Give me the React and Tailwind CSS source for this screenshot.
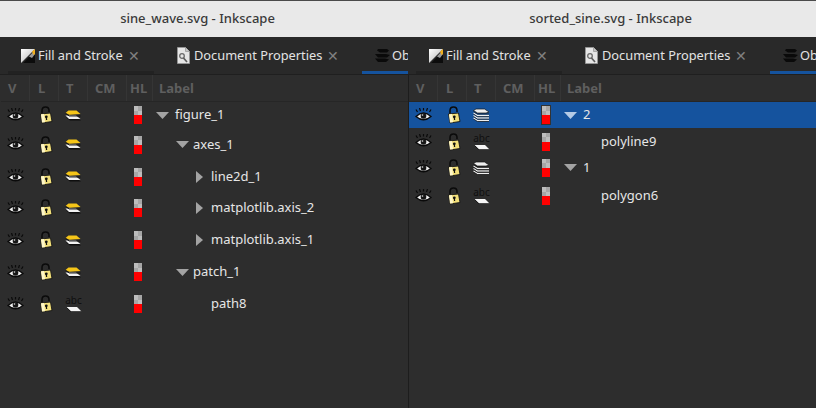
import React from "react";

const Eye = () => (
  <svg width="17" height="15" viewBox="0 0 17 15" className="flex-none">
    <path d="M2.500 4 1 1.500M5.500 3 4.500 0M8.500 2.500V0M11.500 3l1-3M14.500 4 16 1.500" stroke="#0a0a0a" strokeWidth="1.200" fill="none" />
    <path d="M1 8.500q7.500-7 15 0q-7.500 6.500-15 0z" fill="#f0f0f0" stroke="#0a0a0a" strokeWidth="1.300" />
    <circle cx="8.500" cy="8" r="2.800" fill="#161616" />
    <circle cx="7.500" cy="7" r="0.800" fill="#ddd" />
  </svg>
);

const Lock = () => (
  <svg width="14" height="18" viewBox="0 0 14 18" className="flex-none">
    <path d="M3 8V4.500Q3 1 6.500 1T10 4.500V6" stroke="#0a0a0a" strokeWidth="1.500" fill="none" />
    <path d="M1.500 8 11.500 7l1.500 8.500-10 1.500z" fill="#f3e07a" stroke="#161616" strokeWidth="0.900" />
    <path d="M2 8.200 5 8l1 8.200-3 .4z" fill="#fff7c8" />
    <circle cx="7.300" cy="10.800" r="1.400" fill="#111" />
    <path d="M6.700 11h1.200l.3 3H7z" fill="#111" />
  </svg>
);

const GroupIcon = () => (
  <svg width="17" height="11" viewBox="0 0 17 11" className="flex-none">
    <path d="M1 7.500h10.500l4.500 3H5z" fill="#0e0e0e" />
    <path d="M0.500 5.500h10.500l4.500 3.500H4z" fill="#f2f2f2" />
    <path d="M3.500 .5h8l4 3.500-11 .8L.5 3z" fill="#f5c518" />
    <path d="M.5 3.300 4.200 6H15.500" stroke="#111" strokeWidth="0.900" fill="none" />
  </svg>
);

const StackIcon = () => (
  <svg width="17" height="14" viewBox="0 0 17 14" className="flex-none">
    <path d="M3 1h8.500l4.500 3-3 1H4.500L.5 2.500z" fill="#efefef" stroke="#161616" strokeWidth="0.700" />
    <path d="M.5 5 4.500 7.500H16M.5 7.500 4.500 10H16M.5 10 4.500 12.500H16" stroke="#efefef" strokeWidth="1.400" fill="none" />
    <path d="M.5 3.500 4.500 6H16M.5 6 4.500 8.700H16M.5 8.500 4.500 11.200H16M.5 11 4.500 13.500H16" stroke="#161616" strokeWidth="0.700" fill="none" />
  </svg>
);

const TextIcon = () => (
  <div className="flex w-[16px] flex-none flex-col items-center">
    <span className="text-[10px] leading-[9px] text-[#0f0f0f]">abc</span>
    <svg width="16" height="6" viewBox="0 0 16 6" className="mt-[1px]">
      <path d="M.5 1H11l4.500 4.500H5z" fill="#f5f5f5" />
      <path d="M.5 1.500 5 5.800h10.500" stroke="#0c0c0c" strokeWidth="0.800" fill="none" />
    </svg>
  </div>
);

const HlBar = ({ selected }) => (
  <div className={`flex w-[8px] flex-col ${selected ? "outline outline-1 outline-[#333]" : ""}`}>
    <div className="grid h-[9px] grid-cols-2 grid-rows-2">
      <div className="bg-[#bdbdbd]" />
      <div className="bg-[#a6a6a6]" />
      <div className="bg-[#a6a6a6]" />
      <div className="bg-[#bdbdbd]" />
    </div>
    <div className="h-[9px] bg-[#ff0000]" />
  </div>
);

const FillIcon = () => (
  <svg width="16" height="16" viewBox="0 0 16 16" className="flex-none">
    <defs>
      <linearGradient id="fillSheet" x1="0" y1="0" x2="1" y2="1">
        <stop offset="0" stopColor="#ffffff" />
        <stop offset="0.6" stopColor="#cfcfcf" />
      </linearGradient>
    </defs>
    <path d="M1 1h14L1 15z" fill="url(#fillSheet)" />
    <path d="M15 3v12H3z" fill="#0c0c0c" />
    <path d="M9 8.500 15 2v4l-3 4z" fill="#999" />
    <path d="M12 3.500 15 1v5l-1.500 1z" fill="#f0b020" />
  </svg>
);

const DocIcon = () => (
  <svg width="13" height="17" viewBox="0 0 13 17" className="mr-[2px] flex-none">
    <path d="M.5.500h8l4 4v12H.5z" fill="#e6e6e6" stroke="#9a9a9a" strokeWidth="0.800" />
    <path d="M8.500.500v4h4" fill="#c4c4c4" stroke="#9a9a9a" strokeWidth="0.800" />
    <circle cx="5" cy="9" r="2.300" fill="none" stroke="#6a6a6a" strokeWidth="1.300" />
    <path d="M6.500 11 10 15" stroke="#5c5c5c" strokeWidth="1.700" />
  </svg>
);

const ObjectsIcon = () => (
  <svg width="16" height="13" viewBox="0 0 16 13" className="flex-none">
    <path d="M4 0h9l2 1.500-2 2H6L3 1.500zM1 5h11l4 1-3 2.500H4zM1 9.500h10l4 1-3 2.500H4z" fill="#0a0a0a" />
  </svg>
);

const Tab = ({ width, iconLeft, icon, label, showClose, under }) => (
  <div className={`relative flex h-full flex-none items-center overflow-hidden ${width} ${iconLeft}`}>
    {icon}
    <span className="ml-[2px] whitespace-nowrap pt-[1px] text-[12.8px] text-[#e3e3e3]">{label}</span>
    {showClose && <span className="ml-[5px] pt-[1px] text-[14px] leading-none text-[#808080]">✕</span>}
    {under && <div className={`absolute inset-x-0 bottom-0 ${under}`} />}
  </div>
);

const Triangle = ({ kind, selected }) => {
  if (kind === "down") {
    return (
      <svg width="13" height="7" viewBox="0 0 13 7">
        <path d="M0 0h13L6.500 7z" fill={selected ? "#b5cbe6" : "#a3a3a3"} />
      </svg>
    );
  }
  return (
    <svg width="7" height="12" viewBox="0 0 7 12">
      <path d="M0 0 7 6 0 12z" fill="#a3a3a3" />
    </svg>
  );
};

const Header = () => (
  <div className="flex h-[27px] border-b border-[#262626] text-[13px] font-bold leading-[26px] text-[#5f5f5f]">
    <div className="w-[29px] border-r border-[#353535] pl-[7px]">V</div>
    <div className="w-[29px] border-r border-[#353535] pl-[8px]">L</div>
    <div className="w-[29px] border-r border-[#353535] pl-[7px]">T</div>
    <div className="w-[39px] border-r border-[#353535] pl-[7px]">CM</div>
    <div className="w-[26px] border-r border-[#353535] pl-[3px]">HL</div>
    <div className="pl-[6px]">Label</div>
  </div>
);

const Row = ({ row }) => (
  <div className={`flex items-center ${row.h} ${row.selected ? "bg-[#15539e]" : ""}`}>
    <div className="flex w-[29px] justify-center"><Eye /></div>
    <div className="flex w-[29px] justify-center pl-[2px]"><Lock /></div>
    <div className="flex w-[29px] justify-center">
      {row.type === "group" && <GroupIcon />}
      {row.type === "stack" && <StackIcon />}
      {row.type === "text" && <TextIcon />}
    </div>
    <div className="w-[39px]" />
    <div className="flex w-[26px] justify-center pr-[4px]"><HlBar selected={row.selected} /></div>
    <div className={`flex items-center ${row.pad}`}>
      <div className={`flex items-center ${row.triBox}`}>
        {row.tri && <Triangle kind={row.tri} selected={row.selected} />}
      </div>
      <span className="text-[13px] text-[#e6e6e6]">{row.label}</span>
    </div>
  </div>
);

const Window = ({ title, titlePad, rows, second }) => (
  <div className="flex h-[408px] w-[408px] flex-none flex-col overflow-hidden bg-[#2d2d2d]">
    <div className="h-[1px] flex-none bg-[#4a4a4a]" />
    <div className={`flex h-[36px] flex-none items-center justify-center bg-[#e9e9e9] text-[13px] font-medium text-[#3a3a3a] ${titlePad}`}>
      {title}
    </div>
    <div className="flex h-[38px] flex-none items-stretch border-b border-[#1f1f1f] bg-[#292929]">
      <Tab width="w-[154px]" iconLeft="pl-[20px]" icon={<FillIcon />} label="Fill and Stroke" showClose under="ml-[8px] h-[3px] bg-[#222222]" />
      <Tab width="w-[208px]" iconLeft="pl-[23px]" icon={<DocIcon />} label="Document Properties" showClose />
      <Tab width="w-[46px]" iconLeft="pl-[12px]" icon={<ObjectsIcon />} label="Ob" under="h-[3px] bg-[#15539e]" />
    </div>
    <div className={`flex-1 ${second ? "border-l border-[#1d1d1d]" : "pl-[1px]"}`}>
      <Header />
      {rows.map((row) => (
        <Row key={row.label} row={row} />
      ))}
    </div>
  </div>
);

const leftRows = [
  { label: "figure_1", type: "group", h: "h-[26px]", pad: "pl-[3px]", triBox: "w-[19px]", tri: "down" },
  { label: "axes_1", type: "group", h: "h-[33px]", pad: "pl-[23px]", triBox: "w-[17px]", tri: "down" },
  { label: "line2d_1", type: "group", h: "h-[31px]", pad: "pl-[43px]", triBox: "w-[15px]", tri: "right" },
  { label: "matplotlib.axis_2", type: "group", h: "h-[32px]", pad: "pl-[43px]", triBox: "w-[15px]", tri: "right" },
  { label: "matplotlib.axis_1", type: "group", h: "h-[32px]", pad: "pl-[43px]", triBox: "w-[15px]", tri: "right" },
  { label: "patch_1", type: "group", h: "h-[32px]", pad: "pl-[23px]", triBox: "w-[17px]", tri: "down" },
  { label: "path8", type: "text", h: "h-[32px]", pad: "pl-[40px]", triBox: "w-[18px]" },
];

const rightRows = [
  { label: "2", type: "stack", h: "h-[26px]", pad: "pl-[3px]", triBox: "w-[19px]", tri: "down", selected: true },
  { label: "polyline9", type: "text", h: "h-[27px]", pad: "pl-[22px]", triBox: "w-[18px]" },
  { label: "1", type: "stack", h: "h-[25px]", pad: "pl-[3px]", triBox: "w-[19px]", tri: "down" },
  { label: "polygon6", type: "text", h: "h-[32px]", pad: "pl-[22px]", triBox: "w-[18px]" },
];

export default function App() {
  return (
    <div className="flex h-[408px] w-[816px] overflow-hidden font-['Noto_Sans','Open_Sans',sans-serif]">
      <Window title="sine_wave.svg - Inkscape" titlePad="pr-[13px]" rows={leftRows} />
      <Window title="sorted_sine.svg - Inkscape" titlePad="pr-[3px]" rows={rightRows} second />
    </div>
  );
}
